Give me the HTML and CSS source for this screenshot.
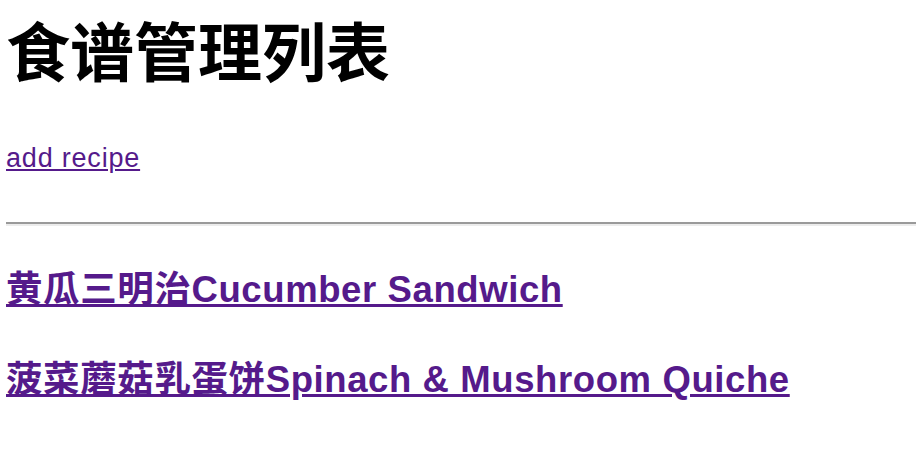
FILE: index.html
```html
<!DOCTYPE html>
<html lang="zh">
<head>
<meta charset="utf-8">
<title>食谱管理列表</title>
<link rel="stylesheet" href="styles.css">
</head>
<body>
<h1 class="title">食谱管理列表</h1>
<p class="add"><a href="#">add recipe</a></p>
<hr class="rule">
<ul class="recipes">
  <li class="recipe"><a href="#">黄瓜三明治Cucumber Sandwich</a></li>
  <li class="recipe"><a href="#">菠菜蘑菇乳蛋饼Spinach &amp; Mushroom Quiche</a></li>
</ul>
</body>
</html>
```
FILE: styles.css
```css
html, body {
  margin: 0;
  padding: 0;
  background: #fff;
}
body {
  padding: 0 0 0 6px;
  font-family: "Liberation Sans", "Noto Sans CJK SC", sans-serif;
  color: #000;
}
a {
  color: #551a8b;
  text-decoration: underline;
}
.title {
  margin: 0;
  padding-top: 16px;
  font-size: 64px;
  line-height: 76px;
  font-weight: 700;
}
.add {
  margin: 51px 0 0;
  font-size: 27px;
  line-height: 30px;
  letter-spacing: 0.8px;
}
.rule {
  margin: 49px 0 0;
  border: 0;
  border-top: 2px solid #9a9a9a;
  border-bottom: 2px solid #ececec;
  height: 0;
}
.recipes {
  list-style: none;
  margin: 0;
  padding: 0;
}
.recipe {
  margin-top: 41px;
  font-size: 36.5px;
  line-height: 46px;
  font-weight: 700;
  letter-spacing: 0.6px;
}
.recipe + .recipe {
  margin-top: 44px;
}
```
